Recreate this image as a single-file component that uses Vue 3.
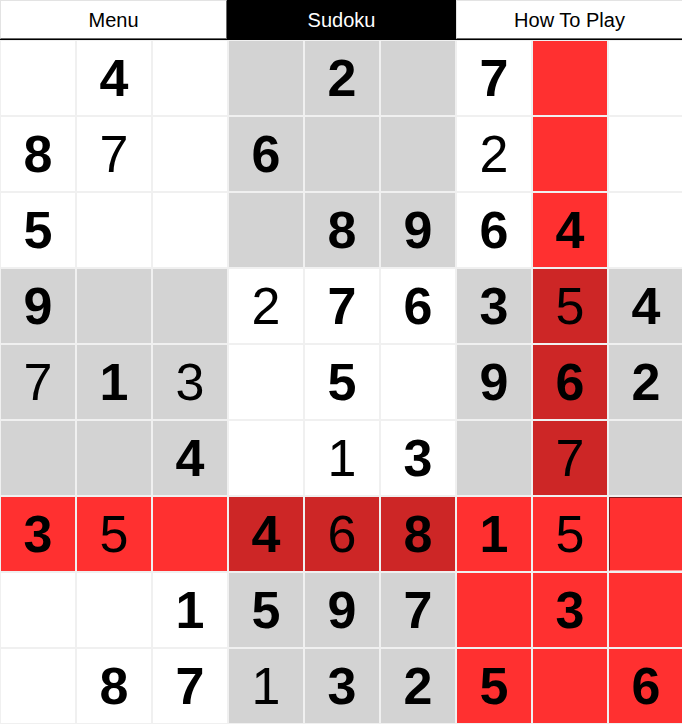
<script setup>
import { ref, computed } from 'vue'

const tabs = ['Menu', 'Sudoku', 'How To Play']
const activeTab = ref('Sudoku')

// Clues given by the puzzle, and the digits entered by the player.
const clues = [
  '.4..2.7..',
  '8..6.....',
  '5...8964.',
  '9...763.4',
  '.1..5.962',
  '..4..3...',
  '3..4.81..',
  '..1597.3.',
  '.87.325.6',
]
const entries = [
  '.........',
  '.7....2..',
  '.........',
  '...2...5.',
  '7.3......',
  '....1..7.',
  '.5..6..5.',
  '.........',
  '...1.....',
]

const selected = ref({ row: 6, col: 8 })
const peerColumn = ref(7)

const cells = computed(() => {
  const list = []
  for (let row = 0; row < 9; row++) {
    for (let col = 0; col < 9; col++) {
      const clue = clues[row][col]
      const entry = entries[row][col]
      const band = Math.floor(row / 3)
      const stack = Math.floor(col / 3)
      const { row: selRow, col: selCol } = selected.value
      list.push({
        key: row * 9 + col,
        row,
        col,
        digit: clue !== '.' ? clue : entry !== '.' ? entry : '',
        given: clue !== '.',
        shaded: (band + stack) % 2 === 1,
        marked:
          row === selRow ||
          col === peerColumn.value ||
          (band === Math.floor(selRow / 3) && stack === Math.floor(selCol / 3)),
        selected: row === selRow && col === selCol,
      })
    }
  }
  return list
})

function select(cell) {
  selected.value = { row: cell.row, col: cell.col }
  peerColumn.value = cell.col
}
</script>

<template>
  <main class="app">
    <nav class="tabs">
      <button
        v-for="tab in tabs"
        :key="tab"
        type="button"
        class="tab"
        :class="{ active: tab === activeTab }"
        @click="activeTab = tab"
      >
        {{ tab }}
      </button>
    </nav>
    <section class="board">
      <button
        v-for="cell in cells"
        :key="cell.key"
        type="button"
        class="cell"
        :class="{
          given: cell.given,
          shaded: cell.shaded,
          marked: cell.marked,
          selected: cell.selected,
        }"
        :aria-label="`Row ${cell.row + 1}, column ${cell.col + 1}`"
        @click="select(cell)"
      >
        {{ cell.digit }}
      </button>
    </section>
  </main>
</template>

<style>
body {
  margin: 0;
  background: #f0f0f0;
}
</style>

<style scoped>
.app {
  overflow: hidden;
  font-family: "Liberation Sans", Arial, sans-serif;
  color: #000;
}

button {
  box-sizing: border-box;
  margin: 0;
  padding: 0;
  border: 0;
  border-radius: 0;
  font-family: inherit;
  color: inherit;
  cursor: pointer;
}

.tabs {
  display: grid;
  grid-template-columns: 227fr 229fr 226fr;
  height: 40px;
  box-sizing: border-box;
  border-bottom: 1px solid #000;
}

.tab {
  border: 1px solid;
  border-color: #e3e3e3 #696969 #696969 #e3e3e3;
  background: #fff;
  font-size: 20px;
  line-height: 24px;
}

.tab:last-child {
  border-right: 0;
}

.tab.active {
  border-color: #000;
  background: #000;
  color: #fff;
}

.board {
  display: grid;
  grid-template-columns: repeat(9, 1fr);
  gap: 2px;
  width: calc(100% + 2px);
  box-sizing: border-box;
  padding: 1px;
}

.cell {
  height: 74px;
  min-width: 0;
  background: #fff;
  font-size: 52px;
  line-height: 74px;
}

.given {
  font-weight: 700;
}

.shaded {
  background: #d3d3d3;
}

.marked {
  background: #ff3030;
}

.shaded.marked {
  background: #cd2626;
}

.selected {
  border: 1px solid;
  border-color: #801818 #ff9898 #ff9898 #801818;
}
</style>
